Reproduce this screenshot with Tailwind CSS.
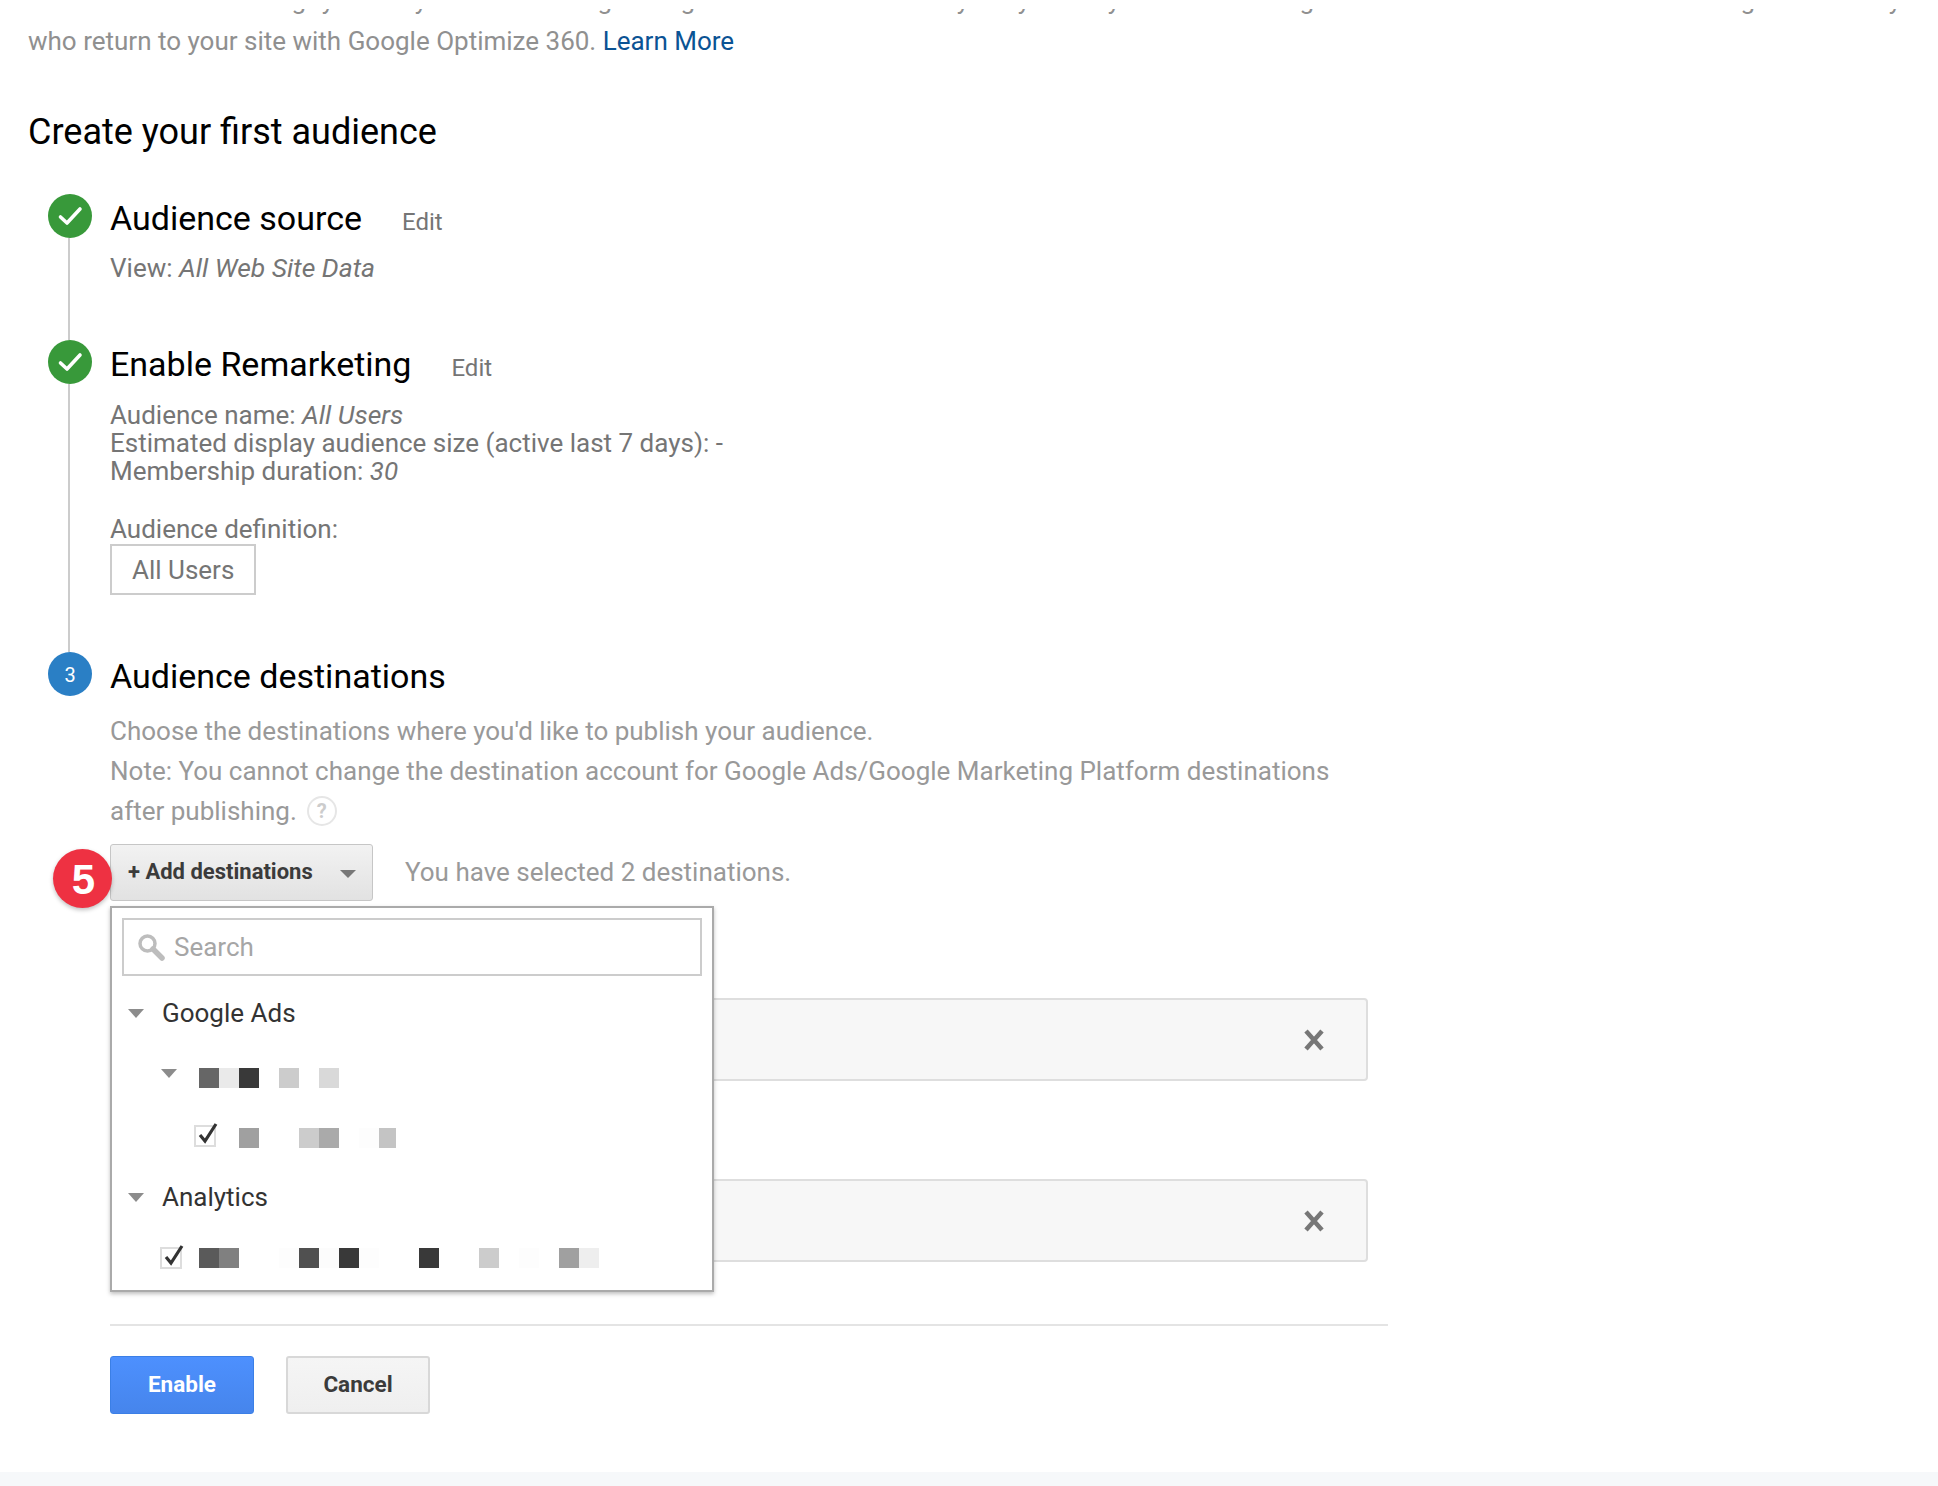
<!DOCTYPE html>
<html lang="en">
<head>
    <meta charset="UTF-8">
    <title>Create your first audience</title>
    <script src="https://cdn.jsdelivr.net/npm/@tailwindcss/browser@4"></script>
</head>
<body class="bg-white font-['Roboto',sans-serif] overflow-hidden">
<div class="h-[1486px] flex flex-col">
    <main class="flex-1 pl-[28px]">
        <!-- Intro text, cut off by the top of the page -->
        <div class="pt-[9px] h-[21px] text-[#909090] text-[26px] leading-[30px]">
            <div class="h-[7px] overflow-hidden">
                <div class="flex whitespace-nowrap -mt-[24px]">
                    <span class="w-[278px] shrink-0 text-right">Choose a remarketing</span>
                    <span class="w-[28px] shrink-0 text-right">by</span>
                    <span class="w-[87px] shrink-0 text-right">an entry</span>
                    <span class="w-[191px] shrink-0 text-right">and then using</span>
                    <span class="w-[83px] shrink-0 text-right">a tag</span>
                    <span class="w-[274px] shrink-0 text-right">from the last country</span>
                    <span class="w-[61px] shrink-0 text-right">only</span>
                    <span class="w-[90px] shrink-0 text-right">they</span>
                    <span class="w-[194px] shrink-0 text-right">to remarketing</span>
                    <span class="w-[441px] shrink-0 text-right">the lists are shared for ads using</span>
                    <span class="w-[146px] shrink-0 text-right">of the day</span>
                </div>
            </div>
        </div>
        <p class="text-[26px] leading-[40px] text-[#909090]">who return to your site with Google Optimize 360. <a href="#" class="text-[#0b5394]">Learn More</a></p>
        <h1 class="mt-[51px] text-[36px] leading-[40px] text-black">Create your first audience</h1>

        <div class="mt-[42px] pl-[20px]">
            <!-- Step 1 -->
            <section class="flex gap-[18px] h-[146px]">
                <div class="w-[44px] flex flex-col items-center">
                    <div class="w-[44px] h-[44px] rounded-full bg-[#38993a] flex items-center justify-center shrink-0">
                        <svg width="28" height="28" viewBox="0 0 28 28" fill="none" stroke="#fff" stroke-width="3.6" stroke-linecap="round" stroke-linejoin="round"><path d="M4.5 15l6.5 6L24 7"/></svg>
                    </div>
                    <div class="w-[2px] mr-[2px] flex-1 bg-[#cccccc]"></div>
                </div>
                <div>
                    <div class="flex items-baseline mt-[1px]">
                        <h2 class="text-[34px] leading-[46px] text-black">Audience source</h2>
                        <a href="#" class="ml-[40px] text-[24px] text-[#757575]">Edit</a>
                    </div>
                    <p class="mt-[11px] text-[26px] leading-[32px] text-[#757575]">View: <em class="text-[26.5px]">All Web Site Data</em></p>
                </div>
            </section>

            <!-- Step 2 -->
            <section class="flex gap-[18px] h-[312px]">
                <div class="w-[44px] flex flex-col items-center">
                    <div class="w-[44px] h-[44px] rounded-full bg-[#38993a] flex items-center justify-center shrink-0">
                        <svg width="28" height="28" viewBox="0 0 28 28" fill="none" stroke="#fff" stroke-width="3.6" stroke-linecap="round" stroke-linejoin="round"><path d="M4.5 15l6.5 6L24 7"/></svg>
                    </div>
                    <div class="w-[2px] mr-[2px] flex-1 bg-[#cccccc]"></div>
                </div>
                <div class="text-[26px] leading-[28px] text-[#757575]">
                    <div class="flex items-baseline mt-[1px]">
                        <h2 class="text-[34px] leading-[46px] text-black">Enable Remarketing</h2>
                        <a href="#" class="ml-[40px] text-[24px] text-[#757575]">Edit</a>
                    </div>
                    <p class="mt-[14px]">Audience name: <em class="text-[26.5px]">All Users</em></p>
                    <p>Estimated display audience size (active last 7 days): -</p>
                    <p>Membership duration: <em>30</em></p>
                    <p class="mt-[30px]">Audience definition:</p>
                    <div class="mt-[1px] w-[146px] h-[51px] border-2 border-[#cccccc] flex items-center pl-[20px]">All Users</div>
                </div>
            </section>

            <!-- Step 3 -->
            <section class="flex gap-[18px]">
                <div class="w-[44px] h-[44px] pt-[1px] rounded-full bg-[#2a7fc5] text-white text-[20px] flex items-center justify-center shrink-0">3</div>
                <div class="flex-1">
                    <h2 class="mt-[1px] text-[34px] leading-[46px] text-black">Audience destinations</h2>
                    <div class="mt-[12px] text-[26px] leading-[40px] text-[#999999] w-[1260px]">
                        <p>Choose the destinations where you'd like to publish your audience.</p>
                        <p>Note: You cannot change the destination account for Google Ads/Google Marketing Platform destinations</p>
                        <p class="flex items-center">after publishing.
                            <span class="ml-[10px] w-[30px] h-[30px] rounded-full border-2 border-[#e6e6e6] text-[#cccccc] text-[20px] font-bold flex items-center justify-center">?</span>
                        </p>
                    </div>

                    <div class="relative mt-[13px]">
                        <!-- Annotation badge -->
                        <div class="absolute -left-[57px] top-[5px] z-20 w-[59px] h-[59px] pl-[2px] pt-[1px] rounded-full bg-[#ee3142] shadow-[0_2px_4px_rgba(0,0,0,0.25)] text-white font-['Liberation_Sans',sans-serif] font-bold text-[42px] flex items-center justify-center">5</div>

                        <div class="flex items-center">
                            <button class="w-[263px] h-[57px] rounded-[3px] border border-[#c6c6c6] bg-gradient-to-b from-[#f2f2f2] to-[#e2e2e2] pl-[17px] pr-[16px] flex items-center justify-between text-[22px] font-bold text-[#3b3b3b]">
                                <span class="-mt-[3px]">+ Add destinations</span>
                                <span class="w-0 h-0 border-x-[8px] border-x-transparent border-t-[8px] border-t-[#777777] mt-[3px]"></span>
                            </button>
                            <span class="ml-[32px] text-[26px] text-[#999999]">You have selected 2 destinations.</span>
                        </div>

                        <!-- Open destinations menu -->
                        <div class="absolute left-0 top-[62px] z-10 w-[604px] h-[386px] bg-white border-2 border-[#aaaaaa] shadow-[0_2px_4px_rgba(0,0,0,0.25)] px-[10px] pt-[10px]">
                            <div class="h-[58px] border-2 border-[#cccccc] flex items-center pl-[12px]">
                                <svg width="30" height="30" viewBox="0 0 30 30" fill="none" stroke="#bdbdbd"><circle cx="11.5" cy="11.5" r="7.5" stroke-width="3.5"/><path d="M17 17l9 9" stroke-width="5.5" stroke-linecap="round"/></svg>
                                <span class="ml-[8px] text-[26px] text-[#a6a6a6]">Search</span>
                            </div>

                            <div class="flex items-center h-[40px] mt-[17px] pl-[6px]">
                                <span class="w-0 h-0 border-x-[8px] border-x-transparent border-t-[9px] border-t-[#8c8c8c]"></span>
                                <span class="ml-[18px] text-[26px] text-[#333333]">Google Ads</span>
                            </div>

                            <div class="flex items-center h-[20px] mt-[35px] pl-[39px]">
                                <span class="w-0 h-0 border-x-[8px] border-x-transparent border-t-[9px] border-t-[#8c8c8c] -mt-[9px]"></span>
                                <div class="flex ml-[22px]">
                                    <i class="w-5 h-5 bg-[#666666]"></i><i class="w-5 h-5 bg-[#eaeaea]"></i><i class="w-5 h-5 bg-[#393939]"></i><i class="w-5 h-5"></i><i class="w-5 h-5 bg-[#cccccc]"></i><i class="w-5 h-5"></i><i class="w-5 h-5 bg-[#d9d9d9]"></i>
                                </div>
                            </div>

                            <div class="flex items-center h-[20px] mt-[40px] pl-[72px]">
                                <span class="relative w-[22px] h-[22px] border-2 border-[#dddddd] -mt-[5px]">
                                    <svg class="absolute -top-[5px] left-0" width="26" height="24" viewBox="0 0 26 24" fill="none" stroke="#333" stroke-width="3.2"><path d="M4 13l5 6L20 2"/></svg>
                                </span>
                                <div class="flex ml-[23px]">
                                    <i class="w-5 h-5 bg-[#a0a0a0]"></i><i class="w-5 h-5"></i><i class="w-5 h-5"></i><i class="w-5 h-5 bg-[#cccccc]"></i><i class="w-5 h-5 bg-[#aaaaaa]"></i><i class="w-5 h-5"></i><i class="w-5 h-5 bg-[#fdfdfd]"></i><i class="w-[17px] h-5 bg-[#c4c4c4]"></i>
                                </div>
                            </div>

                            <div class="flex items-center h-[40px] mt-[29px] pl-[6px]">
                                <span class="w-0 h-0 border-x-[8px] border-x-transparent border-t-[9px] border-t-[#8c8c8c]"></span>
                                <span class="ml-[18px] text-[26px] text-[#333333]">Analytics</span>
                            </div>

                            <div class="flex items-center h-[20px] mt-[31px] pl-[38px]">
                                <span class="relative w-[22px] h-[22px] border-2 border-[#dddddd] shrink-0">
                                    <svg class="absolute -top-[5px] left-0" width="26" height="24" viewBox="0 0 26 24" fill="none" stroke="#333" stroke-width="3.2"><path d="M4 13l5 6L20 2"/></svg>
                                </span>
                                <div class="flex ml-[17px]">
                                    <i class="w-5 h-5 bg-[#5a5a5a]"></i><i class="w-5 h-5 bg-[#808080]"></i><i class="w-5 h-5"></i><i class="w-5 h-5"></i><i class="w-5 h-5 bg-[#fdfdfd]"></i><i class="w-5 h-5 bg-[#505050]"></i><i class="w-5 h-5 bg-[#fcfcfc]"></i><i class="w-5 h-5 bg-[#393939]"></i><i class="w-5 h-5 bg-[#fdfdfd]"></i><i class="w-5 h-5"></i><i class="w-5 h-5"></i><i class="w-5 h-5 bg-[#393939]"></i><i class="w-5 h-5"></i><i class="w-5 h-5"></i><i class="w-5 h-5 bg-[#cccccc]"></i><i class="w-5 h-5"></i><i class="w-5 h-5 bg-[#fdfdfd]"></i><i class="w-5 h-5"></i><i class="w-5 h-5 bg-[#a0a0a0]"></i><i class="w-5 h-5 bg-[#eeeeee]"></i>
                                </div>
                            </div>
                        </div>

                        <!-- Selected destinations -->
                        <div class="mt-[97px] w-[1258px] flex flex-col gap-[98px]">
                            <div class="h-[83px] bg-[#f7f7f7] border-2 border-[#dedede] rounded-[4px] flex items-center justify-end pr-[41px]">
                                <svg width="22" height="22" viewBox="0 0 22 22" stroke="#777" stroke-width="4.5"><path d="M3 2l16 18M19 2L3 20"/></svg>
                            </div>
                            <div class="h-[83px] bg-[#f7f7f7] border-2 border-[#dedede] rounded-[4px] flex items-center justify-end pr-[41px]">
                                <svg width="22" height="22" viewBox="0 0 22 22" stroke="#777" stroke-width="4.5"><path d="M3 2l16 18M19 2L3 20"/></svg>
                            </div>
                        </div>

                        <div class="mt-[62px] w-[1278px] h-[2px] bg-[#e4e4e4]"></div>

                        <div class="mt-[30px] flex gap-[32px]">
                            <button class="w-[144px] h-[58px] rounded-[3px] border border-[#3b7fe6] bg-gradient-to-b from-[#4d90fe] to-[#4685ec] text-white text-[22.5px] font-bold">Enable</button>
                            <button class="w-[144px] h-[58px] rounded-[3px] border-2 border-[#d8d8d8] bg-gradient-to-b from-[#f5f5f5] to-[#efefef] text-[#3b3b3b] text-[22.5px] font-bold">Cancel</button>
                        </div>
                    </div>
                </div>
            </section>
        </div>
    </main>
    <div class="h-[14px] bg-[#f6f8fa]"></div>
</div>
</body>
</html>
